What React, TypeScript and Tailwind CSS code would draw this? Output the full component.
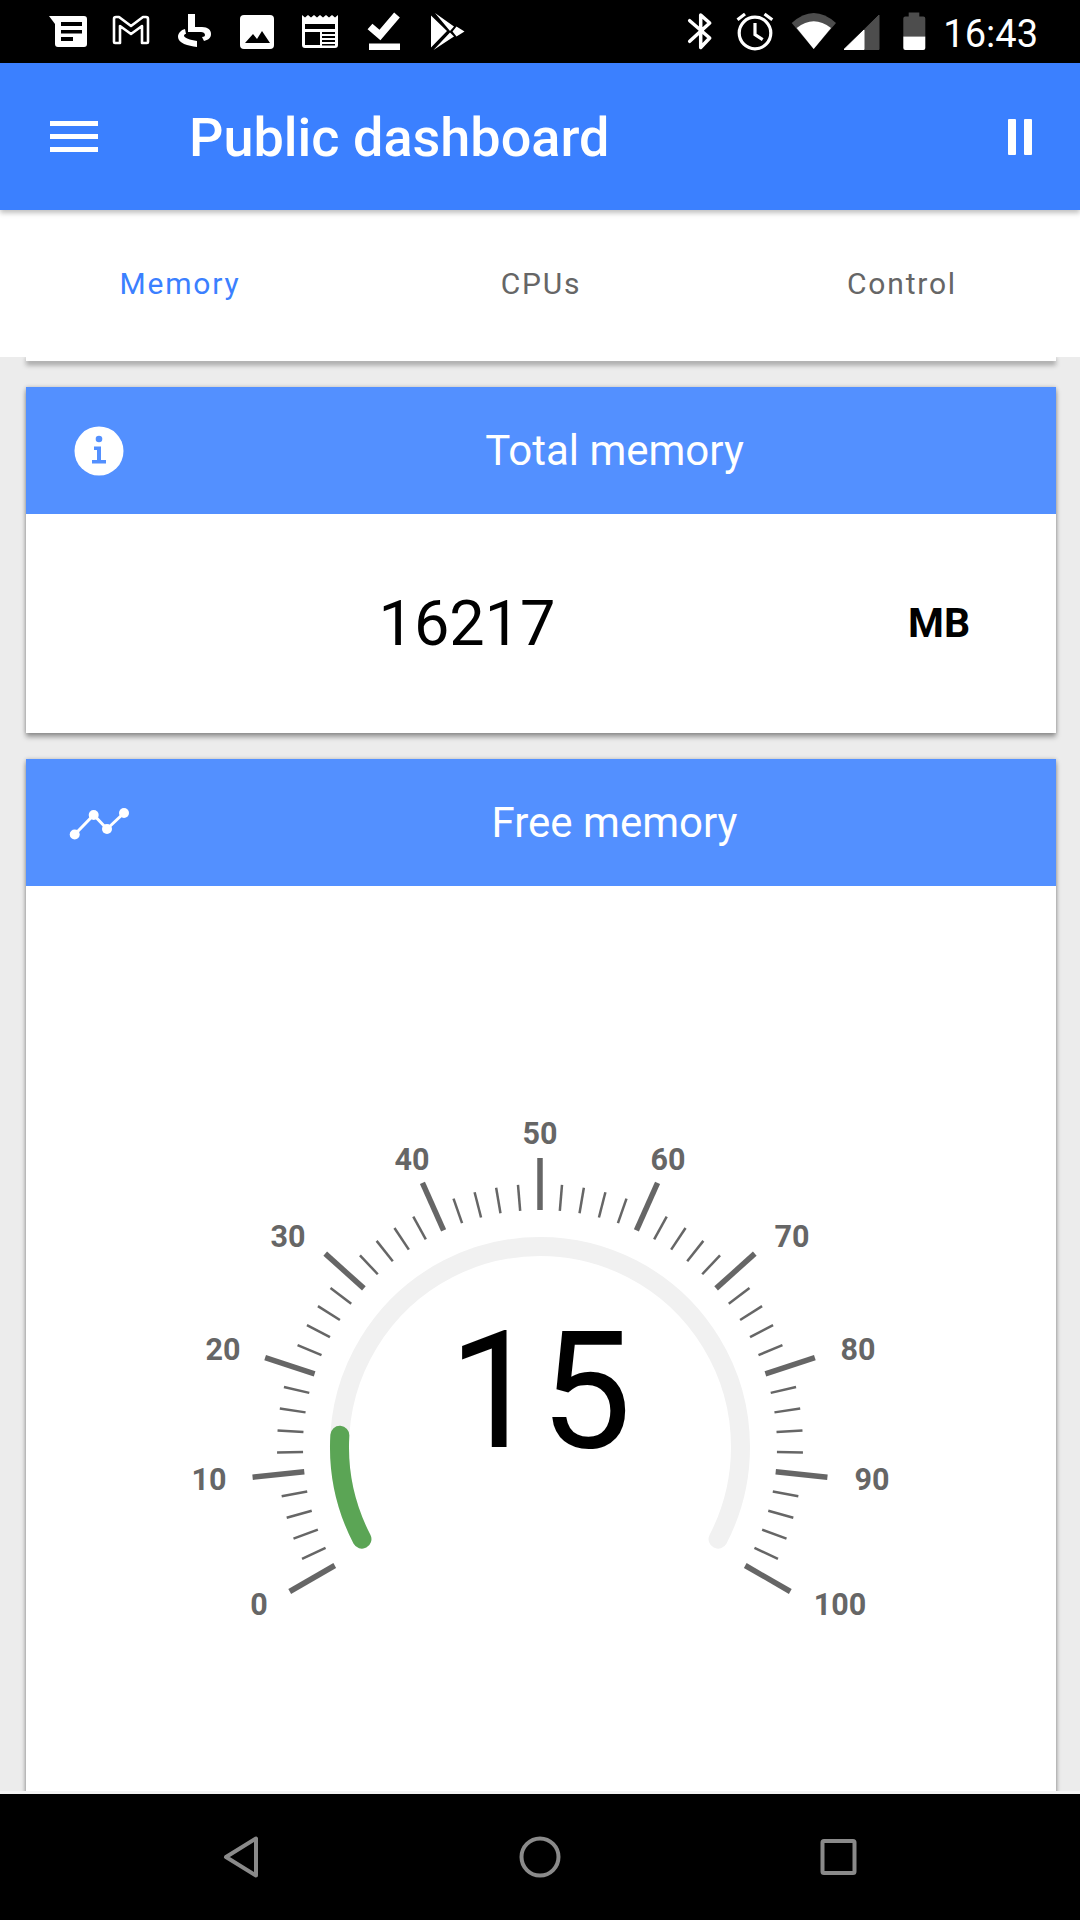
import React from 'react'

const CX = 514
const CY = 561

function polar(value: number, r: number) {
  const a = ((210 - value * 2.4) * Math.PI) / 180
  return { x: CX + r * Math.cos(a), y: CY - r * Math.sin(a) }
}

function arc(from: number, to: number, r: number) {
  const s = polar(from, r)
  const e = polar(to, r)
  const large = (to - from) * 2.4 > 180 ? 1 : 0
  return `M${s.x} ${s.y} A${r} ${r} 0 ${large} 1 ${e.x} ${e.y}`
}

// label centres, measured from the gauge centre
const labels = [
  { t: '0', x: -281, y: 157 },
  { t: '10', x: -331, y: 32 },
  { t: '20', x: -317, y: -98 },
  { t: '30', x: -252, y: -211 },
  { t: '40', x: -128, y: -288 },
  { t: '50', x: 0, y: -314 },
  { t: '60', x: 128, y: -288 },
  { t: '70', x: 252, y: -211 },
  { t: '80', x: 318, y: -98 },
  { t: '90', x: 332, y: 32 },
  { t: '100', x: 300, y: 157 },
]

function Gauge() {
  const ticks = []
  for (let v = 0; v <= 100; v += 2) {
    const major = v % 10 === 0
    const a = polar(v, 237)
    const b = polar(v, major ? 289 : 263)
    ticks.push(
      <line key={v} x1={a.x} y1={a.y} x2={b.x} y2={b.y} stroke="#666666" strokeWidth={major ? 5.5 : 2.5} />,
    )
  }
  return (
    <svg width="1030" height="930" viewBox="0 0 1030 930" className="block">
      {ticks}
      <path d={arc(1.1, 98.9, 200.5)} fill="none" stroke="#f1f1f1" strokeWidth="19" strokeLinecap="round" />
      <path d={arc(1.1, 13.9, 200.5)} fill="none" stroke="#5ba555" strokeWidth="19" strokeLinecap="round" />
      {labels.map((l) => (
        <text key={l.t} x={CX + l.x} y={CY + l.y + 10.5} textAnchor="middle" fontSize="30.5" fontWeight="700" fill="#666666">
          {l.t}
        </text>
      ))}
      <text x={CX} y={CY} textAnchor="middle" fontSize="163" fill="#000000">
        15
      </text>
    </svg>
  )
}

function StatusLeft() {
  return (
    <div className="flex items-center gap-[23px] pl-[48px]">
      <svg width="40" height="40" viewBox="48 12 40 40">
        <path d="M49 16H84a3 3 0 0 1 3 3V44a3 3 0 0 1-3 3H58a3 3 0 0 1-3-3V24Z" fill="#fff" />
        <path d="M61 22h21v4H61zM61 30h21v3.5H61zM61 37h12v4H61z" fill="#000" />
      </svg>
      <svg width="40" height="40" viewBox="111 12 40 40">
        <path
          d="M114 19a2 2 0 0 1 2-2h3L131 26L143 17h3a2 2 0 0 1 2 2V42a1 1 0 0 1-1 1H142V26L131 34L120 26V43H115a1 1 0 0 1-1-1Z"
          fill="none"
          stroke="#fff"
          strokeWidth="2.6"
          strokeLinejoin="round"
        />
      </svg>
      <svg width="40" height="40" viewBox="174 12 40 40">
        <path d="M188 14h7V27h7c6 0 9 3 9 7 0 4-3 6-7 7l-2-4c2 0 3-1 3-2 0-2-2-3-4-3H188Z" fill="#fff" />
        <path d="M185 29l1 5c-1 0-2 .6-2 1.500 0 2.500 6 4.500 13 5.500v6c-9-1-19-4-19-10 0-4 3-7 7-8Z" fill="#fff" />
      </svg>
      <svg width="40" height="40" viewBox="237 12 40 40">
        <rect x="240" y="15" width="34" height="34" rx="4" fill="#fff" />
        <path d="M245 43L253 34L257 39L262 31L270 43Z" fill="#000" />
      </svg>
      <svg width="40" height="40" viewBox="300 12 40 40">
        <path
          d="M302 15l3 2.500 3-2.500 3 2.500 3-2.500 3 2.500 3-2.500 3 2.500 3-2.500 3 2.500 3-2.500 3 2.500 3-2.500V45a3 3 0 0 1-3 3H305a3 3 0 0 1-3-3Z"
          fill="#fff"
        />
        <path d="M305 24h30v5H305zM305 32h15v13H305zM322 32h13v2H322zM322 36h13v2H322zM322 40h13v2H322zM322 44h13v1.500H322z" fill="#000" />
      </svg>
      <svg width="40" height="40" viewBox="363 12 40 40">
        <path d="M370 26.500L380 35L397 15" fill="none" stroke="#fff" strokeWidth="7.5" />
        <rect x="369" y="43.500" width="31" height="6.500" fill="#fff" />
      </svg>
      <svg width="40" height="40" viewBox="426 12 40 40">
        <path
          d="M431 15.500L447 31L431 47.500ZM435 13L454 26.500L450 31ZM433.500 50L454 36.500L450 32.500ZM456.500 26.500L464.500 31.500L456.500 36.500L452.500 31.500Z"
          fill="#fff"
        />
      </svg>
    </div>
  )
}

function StatusRight() {
  return (
    <div className="flex items-center pr-[42px]">
      <svg width="26" height="40" viewBox="689 12 26 40" className="mr-[22px]">
        <path
          d="M691.700 20.700L711.700 38L702.700 47.500V15L711.700 23L691.700 41.300"
          fill="none"
          stroke="#fff"
          strokeWidth="3.500"
          strokeLinecap="round"
          strokeLinejoin="round"
        />
      </svg>
      <svg width="40" height="40" viewBox="735 12 40 40" className="mr-[15px]">
        <circle cx="755" cy="33" r="15.800" fill="none" stroke="#fff" strokeWidth="3.200" />
        <path
          d="M755 23V34.700L762.700 39.700M737.500 19.700L745 14M764.500 14L772.300 19.700"
          fill="none"
          stroke="#fff"
          strokeWidth="3.200"
        />
      </svg>
      <svg width="90" height="40" viewBox="790 12 90 40" className="mr-[22px]">
        <path d="M813.700 49L791.700 23Q813.700 3 836 23Z" fill="#4d4d4d" />
        <path d="M813.700 49L796.700 28Q813.700 14.600 831 28Z" fill="#fff" />
        <path d="M844 49.500L879 15V49.500Z" fill="#4d4d4d" stroke="#4d4d4d" strokeWidth="1" strokeLinejoin="round" />
        <path d="M844 49.500L864 30V49.500Z" fill="#fff" stroke="#fff" strokeWidth="1" strokeLinejoin="round" />
      </svg>
      <svg width="24" height="40" viewBox="901 12 24 40" className="mr-[17px]">
        <path d="M907.700 12.500H918.300V16.500H922.300a2 2 0 0 1 2 2V36.500H902.300V18.500a2 2 0 0 1 2-2H907.700Z" fill="#4d4d4d" />
        <path d="M902.300 36.500H924.300V48a2 2 0 0 1-2 2H904.300a2 2 0 0 1-2-2Z" fill="#fff" />
      </svg>
      <span className="pt-[4px] text-[38px] leading-none text-white">16:43</span>
    </div>
  )
}

function CardHeader({ icon, title }: { icon: React.ReactNode; title: string }) {
  return (
    <div className="flex h-[127px] items-center bg-[#5390ff] text-white">
      <div className="flex w-[147px] justify-center pr-[2px]">{icon}</div>
      <div className="flex-1 text-center text-[42px]">{title}</div>
    </div>
  )
}

const cardShadow = 'shadow-[0_4px_5px_rgba(0,0,0,0.35),0_0_4px_rgba(0,0,0,0.2)]'

export default function App() {
  return (
    <div className="flex h-[1920px] w-[1080px] flex-col overflow-hidden bg-[#ececec] font-['Roboto',sans-serif]">
      <div className="flex h-[63px] shrink-0 items-center justify-between bg-black">
        <StatusLeft />
        <StatusRight />
      </div>

      <header className="relative z-10 flex h-[147px] shrink-0 items-center bg-[#3b80ff] shadow-[0_3px_5px_rgba(0,0,0,0.25)]">
        <div className="ml-[50px] flex w-[48px] flex-col gap-[8px]">
          <div className="h-[5px] bg-white" />
          <div className="h-[5px] bg-white" />
          <div className="h-[5px] bg-white" />
        </div>
        <h1 className="ml-[91px] pt-[2px] text-[54px] font-medium text-white">Public dashboard</h1>
        <div className="ml-auto mr-[48px] flex gap-[8px]">
          <div className="h-[36px] w-[8px] rounded-[1px] bg-white" />
          <div className="h-[36px] w-[8px] rounded-[1px] bg-white" />
        </div>
      </header>

      <nav className="relative z-[5] grid h-[147px] shrink-0 grid-cols-3 items-center bg-white text-center text-[30px] tracking-[1.8px] text-[#666666]">
        <div className="text-[#3b80ff]">Memory</div>
        <div className="pl-[2px]">CPUs</div>
        <div className="pl-[4px]">Control</div>
      </nav>

      <main className="min-h-0 flex-1 overflow-hidden">
        <div className={`ml-[26px] h-[4px] w-[1030px] bg-white ${cardShadow}`} />

        <section className={`ml-[26px] mt-[26px] w-[1030px] bg-white ${cardShadow}`}>
          <CardHeader
            title="Total memory"
            icon={
              <svg width="50" height="50" viewBox="0 0 50 50">
                <circle cx="25" cy="25" r="24.500" fill="#fff" />
                <circle cx="25" cy="13" r="3.300" fill="#5390ff" />
                <path d="M20 20.500H27V34H32V37.500H18V34H23V24H20Z" fill="#5390ff" />
              </svg>
            }
          />
          <div className="flex h-[219px] items-center">
            <div className="w-[882px] pt-[2px] text-center text-[63px] text-black">16217</div>
            <div className="text-[41px] font-bold text-black">MB</div>
          </div>
        </section>

        <section className={`ml-[26px] mt-[26px] w-[1030px] bg-white ${cardShadow}`}>
          <CardHeader
            title="Free memory"
            icon={
              <svg width="62" height="36" viewBox="69 804 62 36" className="ml-[2px]">
                <path d="M74.700 833.500L93.700 814L107 828L124 812" fill="none" stroke="#fff" strokeWidth="3" />
                <circle cx="74.700" cy="833.500" r="5" fill="#fff" />
                <circle cx="93.700" cy="814" r="5" fill="#fff" />
                <circle cx="107" cy="828" r="5" fill="#fff" />
                <circle cx="124" cy="812" r="5" fill="#fff" />
              </svg>
            }
          />
          <Gauge />
        </section>
      </main>

      <div className="relative h-[3px] shrink-0 bg-[#f4f4f4]" />

      <div className="flex h-[126px] shrink-0 items-start bg-black pl-[222px] pt-[41px]">
        <svg width="38" height="44" viewBox="222 1835 38 44" className="mr-[258px]">
          <path d="M256 1838.500V1875.500L226 1857Z" fill="none" stroke="#8a8a8a" strokeWidth="4" strokeLinejoin="round" />
        </svg>
        <svg width="44" height="44" viewBox="518 1835 44 44" className="mr-[257px]">
          <circle cx="540" cy="1857" r="18.500" fill="none" stroke="#8a8a8a" strokeWidth="4" />
        </svg>
        <svg width="40" height="44" viewBox="819 1835 40 44">
          <rect x="822.500" y="1841" width="32" height="32" rx="1.500" fill="none" stroke="#8a8a8a" strokeWidth="4" />
        </svg>
      </div>
    </div>
  )
}
